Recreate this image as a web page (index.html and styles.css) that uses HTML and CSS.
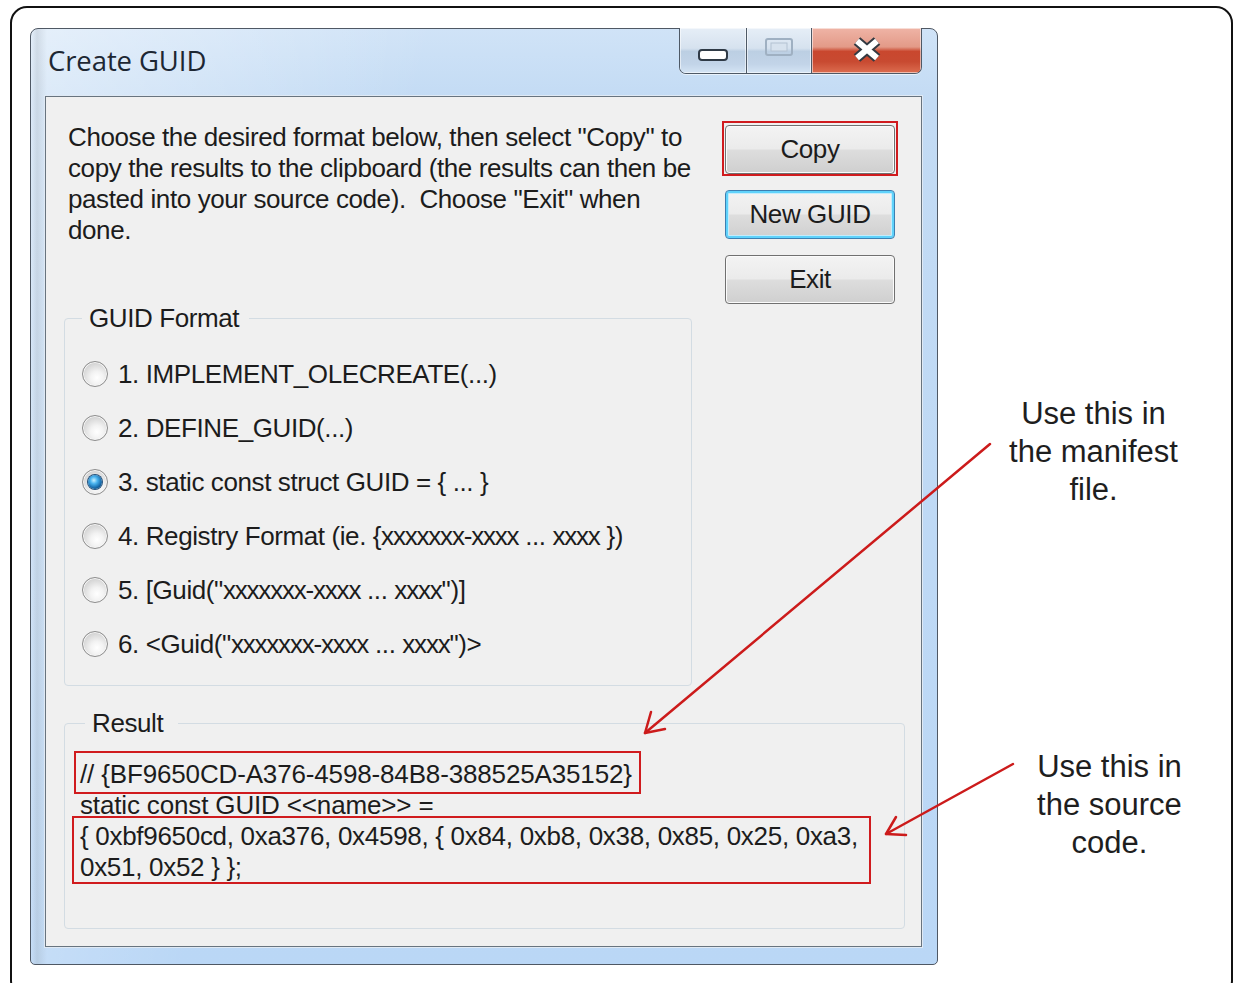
FILE: index.html
```html
<!DOCTYPE html>
<html lang="en">
<head>
<meta charset="utf-8">
<title>Create GUID</title>
<link rel="stylesheet" href="styles.css">
</head>
<body>
<div class="sheet">
  <div class="window">
    <div class="titlebar">
      <span class="title">Create GUID</span>
      <div class="caption-buttons">
        <span class="cap-btn cap-min">
          <svg width="30" height="12" viewBox="0 0 30 12"><rect x="1" y="1" width="28" height="10" rx="3" fill="#fff" stroke="#2f3a46" stroke-width="2"/></svg>
        </span>
        <span class="cap-btn cap-max">
          <svg width="28" height="18" viewBox="0 0 28 18"><rect x="1" y="1" width="26" height="16" rx="2" fill="none" stroke="#9fb0c2" stroke-width="2"/><rect x="6" y="5" width="16" height="8" fill="#d7e2ee" stroke="#b3c2d2" stroke-width="1"/></svg>
        </span>
        <span class="cap-btn cap-close">
          <svg width="32" height="25" viewBox="0 0 32 25"><path d="M6 4 L26 21 M26 4 L6 21" stroke="#333a42" stroke-width="10" fill="none"/><path d="M6 4 L26 21 M26 4 L6 21" stroke="#ffffff" stroke-width="6" fill="none"/></svg>
        </span>
      </div>
    </div>
    <div class="client">
      <div class="top-row">
        <p class="intro">Choose the desired format below, then select "Copy" to<br>copy the results to the clipboard (the results can then be<br>pasted into your source code).&nbsp; Choose "Exit" when<br>done.</p>
        <div class="actions">
          <div class="mark mark-copy"><button class="btn" type="button">Copy</button></div>
          <button class="btn btn-default" type="button">New GUID</button>
          <button class="btn" type="button">Exit</button>
        </div>
      </div>
      <fieldset class="group group-format">
        <legend>GUID Format</legend>
        <label class="radio"><span class="dot"></span>1. IMPLEMENT_OLECREATE(...)</label>
        <label class="radio"><span class="dot"></span>2. DEFINE_GUID(...)</label>
        <label class="radio"><span class="dot checked"></span>3. static const struct GUID = { ... }</label>
        <label class="radio"><span class="dot"></span><span>4. Registry Format (ie. {<span class="ph">xxxxxxx-xxxx</span> ... <span class="ph">xxxx</span> })</span></label>
        <label class="radio"><span class="dot"></span><span>5. [Guid("<span class="ph">xxxxxxx-xxxx</span> ... <span class="ph">xxxx</span>")]</span></label>
        <label class="radio"><span class="dot"></span><span>6. &lt;Guid("<span class="ph">xxxxxxx-xxxx</span> ... <span class="ph">xxxx</span>")&gt;</span></label>
      </fieldset>
      <fieldset class="group group-result">
        <legend>Result</legend>
        <div class="result">
          <div class="mark mark-line">// {BF9650CD-A376-4598-84B8-388525A35152}</div>
          <div>static const GUID &lt;&lt;name&gt;&gt; =</div>
          <div class="mark mark-block">{ 0xbf9650cd, 0xa376, 0x4598, { 0x84, 0xb8, 0x38, 0x85, 0x25, 0xa3,<br>0x51, 0x52 } };</div>
        </div>
      </fieldset>
    </div>
  </div>
  <div class="notes">
    <p class="note note-manifest">Use this in<br>the manifest<br>file.</p>
    <p class="note note-source">Use this in<br>the source<br>code.</p>
  </div>
  <svg class="arrows" width="1233" height="983" viewBox="0 0 1233 983">
    <g stroke="#cc1b1b" stroke-width="2.5" fill="none" stroke-linecap="round" stroke-linejoin="round">
      <path d="M990 444 L645 733"/>
      <path d="M665 729 L645 733 L651 712"/>
      <path d="M1013 764 L886 834"/>
      <path d="M906 835 L886 834 L896 817"/>
    </g>
  </svg>
</div>
</body>
</html>
```

FILE: styles.css
```css
html, body {
  margin: 0;
  padding: 0;
  overflow: hidden;
  background: #ffffff;
}

body {
  font-family: "Liberation Sans", Arial, sans-serif;
  color: #1c1c1c;
}

/* rounded frame around the whole illustration */
.sheet {
  position: relative;
  box-sizing: border-box;
  width: 1223px;
  height: 992px;
  margin: 6px 0 0 10px;
  padding: 20px 0 0 18px;
  border: 2px solid #111111;
  border-radius: 17px;
  display: flex;
}

/* ---------- Aero window ---------- */
.window {
  box-sizing: border-box;
  flex: none;
  width: 908px;
  height: 937px;
  border: 1px solid #4f5864;
  border-radius: 8px 8px 5px 5px;
  background:
    linear-gradient(90deg, rgba(120,130,140,0) 0, rgba(120,130,140,.18) 6px, rgba(120,130,140,0) 16px),
    linear-gradient(105deg, rgba(255,255,255,.45) 0%, rgba(255,255,255,0) 35%),
    linear-gradient(180deg, #d0e3f7 0px, #c3dbf4 70px, #bad7f6 100%);
  display: flex;
  flex-direction: column;
}

.titlebar {
  height: 67px;
  display: flex;
  justify-content: space-between;
  align-items: flex-start;
}

.title {
  padding-left: 17px;
  font-family: "Open Sans", "Liberation Sans", sans-serif;
  font-size: 27.5px;
  line-height: 64px;
  color: #1d2733;
  letter-spacing: -0.1px;
}

.caption-buttons {
  display: flex;
  height: 45px;
  margin: -1px 15px 0 0;
  border: 1px solid #4e5966;
  border-top: 0;
  border-radius: 0 0 7px 7px;
  overflow: hidden;
  box-shadow: 0 1px 0 rgba(255,255,255,.6);
}

.cap-btn {
  box-sizing: border-box;
  display: flex;
  justify-content: center;
  box-shadow: inset 0 0 0 1px rgba(255,255,255,.55);
}

.cap-btn + .cap-btn {
  border-left: 1px solid #4e5966;
}

.cap-min,
.cap-max {
  background: linear-gradient(180deg, #e6eef7 0%, #d6e2ef 45%, #bccfe3 52%, #c2d4e8 80%, #d4e4f4 100%);
}

.cap-min {
  width: 66px;
  align-items: flex-end;
  padding-bottom: 12px;
}

.cap-max {
  width: 65px;
  align-items: center;
  padding-bottom: 8px;
}

.cap-close {
  width: 110px;
  align-items: center;
  padding-bottom: 2px;
  background: linear-gradient(180deg, #efb4a6 0%, #e39a88 42%, #c9472e 52%, #c84a31 75%, #dc6d50 100%);
}

/* ---------- client area ---------- */
.client {
  box-sizing: border-box;
  height: 851px;
  margin: 0 15px 0 14px;
  border: 1px solid #68747f;
  background: #f0f0f0;
  box-shadow: 0 0 0 1px #dfe9f4;
  display: flex;
  flex-direction: column;
  font-size: 26px;
  letter-spacing: -0.4px;
}

.top-row {
  display: flex;
  justify-content: space-between;
  padding: 0 26px 0 22px;
}

.intro {
  margin: 25px 0 0;
  line-height: 31px;
  white-space: nowrap;
}

.actions {
  width: 170px;
  margin-top: 28px;
  display: flex;
  flex-direction: column;
  gap: 16px;
}

.btn {
  display: block;
  box-sizing: border-box;
  width: 170px;
  height: 49px;
  padding: 0;
  font: inherit;
  letter-spacing: inherit;
  color: #1c1c1c;
  border: 1px solid #707070;
  border-radius: 4px;
  background: linear-gradient(180deg, #f3f3f3 0%, #ebebeb 48%, #dddddd 52%, #cfcfcf 100%);
  box-shadow: inset 0 0 0 1px #fbfbfb;
}

.btn-default {
  border-color: #3c7fb1;
  box-shadow: inset 0 0 0 2px #5fd2fb, inset 0 0 0 3px #c4ecfb;
}

/* red highlight boxes */
.mark {
  position: relative;
}

.mark::after {
  content: "";
  position: absolute;
  border: 2px solid #d01b1e;
  pointer-events: none;
}

.mark-copy::after {
  inset: -4px -3px -2px -3px;
}

/* ---------- group boxes ---------- */
.group {
  margin: 0 0 0 18px;
  border: 1px solid #d3dce3;
  border-radius: 4px;
  min-inline-size: 0;
}

.group legend {
  line-height: 30px;
  padding: 0 10px 0 7px;
}

.group-format {
  box-sizing: border-box;
  width: 628px;
  margin-top: -1px;
  padding: 14px 0 14px 17px;
}

.radio {
  display: flex;
  align-items: center;
  gap: 10px;
  height: 54px;
  white-space: nowrap;
}

/* placeholder x-runs are set tighter */
.ph {
  letter-spacing: -1.2px;
}

.dot {
  position: relative;
  box-sizing: border-box;
  flex: none;
  width: 26px;
  height: 26px;
  border-radius: 50%;
  border: 1px solid #8d8d8d;
  background: radial-gradient(circle at 58% 66%, #ffffff 0%, #f3f3f3 30%, #d3d3d3 72%, #e9e9e9 100%);
  box-shadow: inset 0 0 0 1px #f6f6f6;
}

.dot.checked::after {
  content: "";
  position: absolute;
  left: 5px;
  top: 5px;
  width: 14px;
  height: 14px;
  border-radius: 50%;
  background: radial-gradient(circle at 42% 38%, #c8f1ff 0%, #48b2ee 30%, #1466a6 65%, #0b3559 100%);
  box-shadow: 0 0 0 1px #24507a;
}

.group-result {
  margin: 22px 16px 0 18px;
  padding: 21px 0 45px 15px;
}

.group-result legend {
  margin-left: 5px;
  padding: 0 15px 0 7px;
}

.result {
  line-height: 31px;
  white-space: nowrap;
  letter-spacing: -0.15px;
}

.result > div {
  width: fit-content;
}

.mark-line::after {
  inset: -8px -9px -4px -6px;
}

.mark-block {
  letter-spacing: -0.3px;
}

.mark-block::after {
  inset: -5px -13px -1px -8px;
}

/* ---------- side annotations ---------- */
.notes {
  flex: 1;
  display: flex;
  flex-direction: column;
}

.note {
  margin: 0;
  font-size: 31px;
  line-height: 38px;
  text-align: center;
  color: #1e1e1e;
}

.note-manifest {
  margin-top: 367px;
  padding-left: 18px;
}

.note-source {
  margin-top: 239px;
  padding-left: 50px;
}

/* pointer arrows drawn over the window */
.arrows {
  position: absolute;
  left: -12px;
  top: -8px;
  pointer-events: none;
}
```
